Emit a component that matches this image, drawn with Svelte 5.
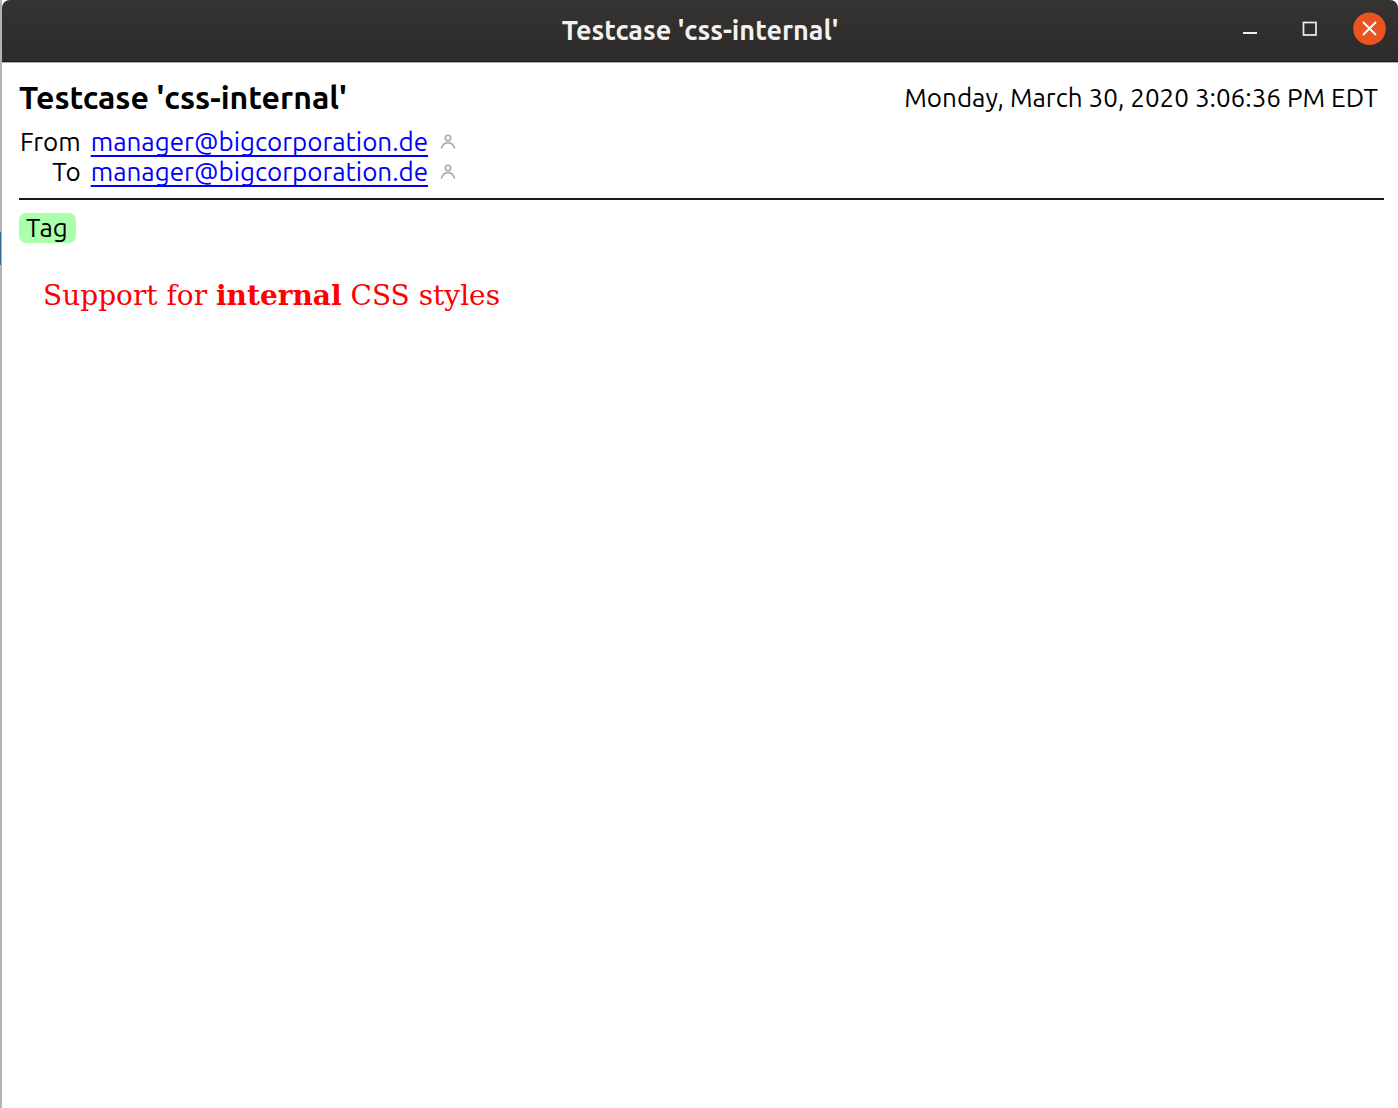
<script>
  const subject = "Testcase 'css-internal'";
  const date = 'Monday, March 30, 2020 3:06:36 PM EDT';
  const people = [
    { label: 'From', address: 'manager@bigcorporation.de' },
    { label: 'To', address: 'manager@bigcorporation.de' },
  ];
</script>

<div class="window">
  <header class="titlebar">
    <span class="title">{subject}</span>
    <div class="controls">
      <button type="button" aria-label="Minimize">
        <svg width="32" height="32" viewBox="0 0 32 32"><path d="M10 20h14" stroke="#efeeec" stroke-width="2" /></svg>
      </button>
      <button type="button" aria-label="Maximize">
        <svg width="32" height="32" viewBox="0 0 32 32"><rect x="10.5" y="9.5" width="12.5" height="12.5" fill="none" stroke="#efeeec" stroke-width="1.7" /></svg>
      </button>
      <button type="button" aria-label="Close">
        <svg width="32" height="32" viewBox="0 0 32 32">
          <circle cx="16.5" cy="15.7" r="16.3" fill="#e95420" />
          <path d="M10 9l13 13M23 9l-13 13" stroke="#fff" stroke-width="1.8" />
        </svg>
      </button>
    </div>
  </header>

  <main class="message">
    <div class="heading">
      <h1>{subject}</h1>
      <time datetime="2020-03-30T15:06:36-04:00">{date}</time>
    </div>

    <dl class="people">
      {#each people as person}
        <dt>{person.label}</dt>
        <dd>
          <a href="mailto:{person.address}">{person.address}</a>
          <svg class="person" width="16" height="16" viewBox="0 0 16 16" aria-hidden="true">
            <circle cx="8" cy="4" r="2.7" />
            <path d="M1.2 14.5C2.5 11 5 8.6 8 8.6s5.5 2.4 6.8 5.9" />
          </svg>
        </dd>
      {/each}
    </dl>

    <hr />
    <span class="tag">Tag</span>
    <p class="body">Support for <b>internal</b> CSS styles</p>
  </main>
</div>

<style>
  :global(body) {
    margin: 0;
    background: #fff;
  }

  .window {
    position: relative;
    min-height: 100vh;
    box-sizing: border-box;
    border-left: 2px solid #b3b3b3;
    font-family: Ubuntu, 'Noto Sans', sans-serif;
    font-size: 26px;
    line-height: 30px;
    color: #000;
  }

  /* Sliver of the window behind, showing at the left edge */
  .window::after {
    content: '';
    position: absolute;
    left: -2px;
    top: 232px;
    width: 1px;
    height: 33px;
    background: #3a6a8c;
  }

  .titlebar {
    display: grid;
    grid-template-columns: 1fr auto 1fr;
    align-items: center;
    height: 62px;
    box-sizing: border-box;
    padding: 0 13px 4px 13px;
    border-bottom: 1px solid #1d1b1a;
    border-radius: 8px 8px 0 0;
    background: linear-gradient(#353432, #2c2a2a);
    box-shadow: 0 1px 0 #b0afae;
  }

  .title {
    grid-column: 2;
    padding-top: 2px;
    color: #f3f2f0;
    font-weight: bold;
    font-size: 27px;
  }

  .controls {
    display: flex;
    justify-content: flex-end;
    gap: 28px;
  }

  button {
    display: block;
    padding: 0;
    border: 0;
    background: none;
  }

  svg {
    display: block;
    overflow: visible;
  }

  .message {
    padding: 19px 14px 20px 17px;
  }

  .heading {
    display: flex;
    justify-content: space-between;
    align-items: end;
    padding-right: 6px;
    line-height: 32px;
  }

  h1 {
    margin: 0;
    font-size: 32px;
  }

  time {
    line-height: 30px;
  }

  .people {
    display: grid;
    grid-template-columns: auto 1fr;
    column-gap: 10px;
    margin: 14px 0 11px;
    padding-left: 1px;
  }

  dt {
    text-align: right;
  }

  dd {
    display: flex;
    align-items: center;
    gap: 12px;
    margin: 0;
  }

  a {
    color: #00f;
    text-decoration-thickness: 2px;
    text-decoration-skip-ink: none;
    text-underline-offset: 4px;
  }

  .person {
    fill: none;
    stroke: #a8a8a8;
    stroke-width: 1.6;
  }

  hr {
    margin: 0 0 13px;
    border: 0;
    border-top: 2px solid #1a1a1a;
  }

  .tag {
    display: inline-block;
    padding: 0 8px 0 7px;
    border-radius: 7px;
    background: #afa;
  }

  .body {
    margin: 36px 24px;
    color: #f00;
    font-family: 'DejaVu Serif', serif;
    font-size: 28px;
    line-height: 34px;
  }
</style>
